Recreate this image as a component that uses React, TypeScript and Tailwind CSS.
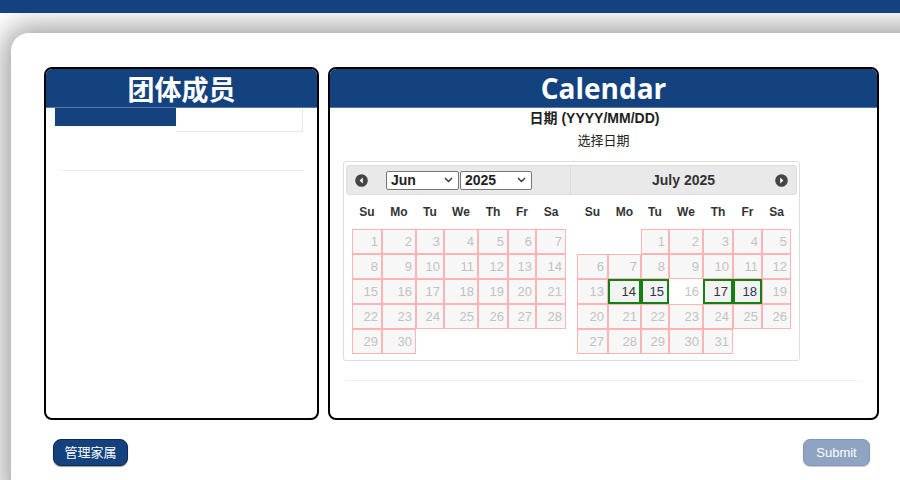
import React from "react";

const NAVY = "bg-[#13427e]";

const weekDays = ["Su", "Mo", "Tu", "We", "Th", "Fr", "Sa"];

type Day = { n: number; kind?: "picked" | "plain" } | null;

const june: Day[][] = [
  [1, 2, 3, 4, 5, 6, 7],
  [8, 9, 10, 11, 12, 13, 14],
  [15, 16, 17, 18, 19, 20, 21],
  [22, 23, 24, 25, 26, 27, 28],
  [29, 30, 0, 0, 0, 0, 0],
].map((r) => r.map((n) => (n ? { n } : null)));

const picked = [14, 15, 17, 18];
const july: Day[][] = [
  [0, 0, 1, 2, 3, 4, 5],
  [6, 7, 8, 9, 10, 11, 12],
  [13, 14, 15, 16, 17, 18, 19],
  [20, 21, 22, 23, 24, 25, 26],
  [27, 28, 29, 30, 31, 0, 0],
].map((r) =>
  r.map((n) =>
    n ? { n, kind: picked.includes(n) ? "picked" : n === 16 ? "plain" : undefined } : null
  )
);

function Chevron() {
  return (
    <svg width="9" height="6" viewBox="0 0 9 6" fill="none">
      <path d="M1 1l3.5 3.5L8 1" stroke="#333" strokeWidth="1.4" />
    </svg>
  );
}

function FakeSelect({ value, width }: { value: string; width: string }) {
  return (
    <div
      className={`${width} h-[19px] border border-[#767676] rounded-[2px] bg-white flex items-center justify-between pl-[4px] pr-[5px] text-[14px] font-bold text-[#222] leading-none`}
    >
      <span>{value}</span>
      <Chevron />
    </div>
  );
}

function NavIcon({ dir }: { dir: "prev" | "next" }) {
  return (
    <svg width="13" height="13" viewBox="0 0 13 13">
      <circle cx="6.5" cy="6.5" r="6.3" fill="#454545" />
      {dir === "prev" ? (
        <path d="M7.8 3.6v5.8L4.6 6.5z" fill="#fff" />
      ) : (
        <path d="M5.2 3.6v5.8l3.2-2.9z" fill="#fff" />
      )}
    </svg>
  );
}

function Month({ rows, cols }: { rows: Day[][]; cols: string }) {
  return (
    <div className="pl-[6px]">
      <div className={`grid ${cols} h-[34px] items-center`}>
        {weekDays.map((d) => (
          <div key={d} className="text-center text-[12px] font-bold text-[#333]">
            {d}
          </div>
        ))}
      </div>
      <div className={`grid ${cols}`}>
        {rows.flat().map((d, i) => {
          if (!d) return <div key={i} className="h-[25px]" />;
          if (d.kind === "picked")
            return (
              <div
                key={i}
                className={`h-[25px] border-2 border-[#138013] bg-[#f3f3f3] text-right pr-[3px] text-[13px] leading-[21px] ${
                  d.n === 15 || d.n === 18 ? "text-[#26375c]" : "text-[#333]"
                }`}
              >
                {d.n}
              </div>
            );
          if (d.kind === "plain")
            return (
              <div key={i} className="h-[25px] bg-white text-right pr-[4px] text-[13px] leading-[25px] text-[#c4c4c4]">
                {d.n}
              </div>
            );
          return (
            <div
              key={i}
              className="h-[25px] border border-[#ffb4b4] bg-[#f7f7f7] text-right pr-[3px] text-[13px] leading-[23px] text-[#c2c2c2]"
            >
              {d.n}
            </div>
          );
        })}
      </div>
    </div>
  );
}

export default function App() {
  return (
    <div className="w-[900px] h-[480px] overflow-hidden bg-white font-['Liberation_Sans','Noto_Sans_CJK_SC',sans-serif]">
      <div className={`relative z-10 h-[13px] ${NAVY}`} />
      <div className="pl-[11px] pt-[20px]">
        <div className="w-[940px] h-[460px] bg-white rounded-tl-[18px] shadow-[0_0_28px_8px_rgba(0,0,0,0.36)] pl-[33px] pt-[34px]">
          <div className="flex gap-[9px]">
            {/* left panel */}
            <div className="w-[275px] h-[353px] border-2 border-black rounded-[8px] overflow-hidden">
              <div className={`h-[39px] ${NAVY} border-b border-[#5a78a3] flex items-center justify-center`}>
                <span className="text-white text-[27px] font-bold font-['Noto_Sans_CJK_SC',sans-serif] leading-none">
                  团体成员
                </span>
              </div>
              <div className="px-[9px]">
                <div className="flex items-start">
                  <div className={`w-[121px] h-[18px] ${NAVY}`} />
                  <div className="w-[127px] h-[24px] border-r border-b border-[#e8e8e8]" />
                </div>
                <div className="ml-[4px] mr-[4px] mt-[38px] h-px bg-[#eeeeee]" />
              </div>
            </div>

            {/* right panel */}
            <div className="w-[551px] h-[353px] border-2 border-black rounded-[8px] overflow-hidden">
              <div className={`h-[39px] ${NAVY} border-b border-[#5a78a3] flex items-center justify-center`}>
                <span className="text-white text-[28px] font-bold font-['Open_Sans',sans-serif] leading-none">
                  Calendar
                </span>
              </div>
              <div className="pt-[1px] text-center text-[14px] font-bold leading-[18px] text-[#222] mr-[18px]">
                日期 (YYYY/MM/DD)
              </div>
              <div className="mt-[5px] text-center text-[13px] leading-[18px] text-[#222]">选择日期</div>

              <div className="ml-[13px] mt-[11px] w-[457px] border border-[#dddddd] rounded-[3px] px-[2px] pt-[3px] pb-[6px]">
                <div className="h-[30px] bg-[#e9e9e9] border border-[#dddddd] rounded-[3px] flex">
                  <div className="w-[224px] flex items-center border-r border-[#dadada]">
                    <div className="ml-[8px] flex">
                      <NavIcon dir="prev" />
                    </div>
                    <div className="ml-[18px] flex gap-px">
                      <FakeSelect value="Jun" width="w-[73px]" />
                      <FakeSelect value="2025" width="w-[72px]" />
                    </div>
                  </div>
                  <div className="flex-1 flex items-center justify-between pl-[81px] pr-[8px]">
                    <span className="text-[14px] font-bold text-[#333]">July 2025</span>
                    <NavIcon dir="next" />
                  </div>
                </div>
                <div className="flex">
                  <div className="w-[225px]">
                    <Month rows={june} cols="grid-cols-[30px_34px_28px_34px_30px_28px_30px]" />
                  </div>
                  <div className="w-[226px]">
                    <Month rows={july} cols="grid-cols-[31px_33px_28px_34px_30px_29px_29px]" />
                  </div>
                </div>
              </div>

              <div className="mx-[15px] mt-[19px] h-px bg-[#f0f0f0]" />
            </div>
          </div>

          {/* buttons */}
          <div className="w-[835px] mt-[19px] px-[9px] flex justify-between">
            <button className="w-[75px] h-[27px] rounded-[8px] bg-[#13427e] border border-[#0b2a57] shadow-[0_1px_1px_rgba(0,0,0,0.4)] text-white text-[13px] leading-none">
              管理家属
            </button>
            <button className="w-[67px] h-[27px] rounded-[7px] bg-[#8fa3c3] border border-[#8096b8] shadow-[0_1px_1px_rgba(0,0,0,0.2)] text-white text-[13px] leading-none">
              Submit
            </button>
          </div>
        </div>
      </div>
    </div>
  );
}
